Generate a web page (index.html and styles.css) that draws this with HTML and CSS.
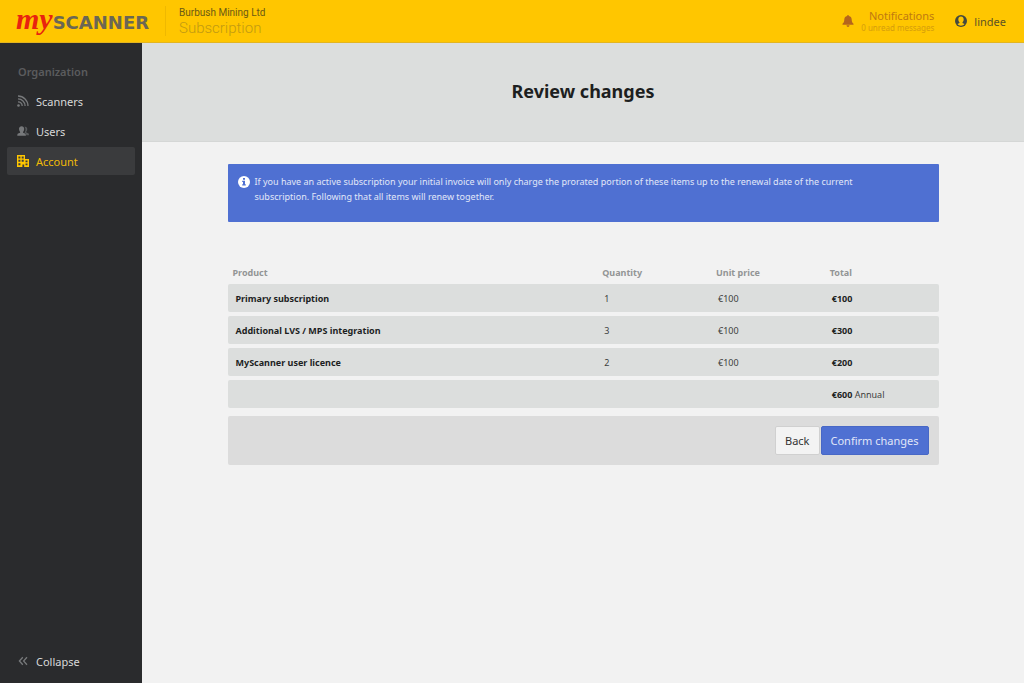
FILE: index.html
```html
<!DOCTYPE html>
<html lang="en">
<head>
<meta charset="utf-8">
<meta name="viewport" content="width=device-width, initial-scale=1">
<title>Review changes</title>
<link rel="stylesheet" href="styles.css">
</head>
<body>
<header class="topbar">
  <a class="logo" href="#"><span class="logo-my">my</span><span class="logo-name">SCANNER</span></a>
  <div class="context">
    <div class="company">Burbush Mining Ltd</div>
    <div class="section">Subscription</div>
  </div>
  <a class="notifications" href="#">
    <svg class="bell" viewBox="0 0 12 12" aria-hidden="true"><path d="M6 0c.6 0 .9.4.9.9C8.900 1.300 9.700 2.800 9.700 4.600c0 2.400.7 3.400 1.800 4.200v.9H.5v-.9c1.100-.8 1.800-1.800 1.800-4.200 0-1.800.8-3.300 2.800-3.700C5.100.4 5.400 0 6 0zM4.500 10.300h3C7.400 11.300 6.800 12 6 12s-1.400-.7-1.500-1.700z"/></svg>
    <span class="notice-text"><span class="notice-title">Notifications</span><span class="notice-count">0 unread messages</span></span>
  </a>
  <a class="user" href="#">
    <svg class="avatar" viewBox="0 0 12 12" aria-hidden="true"><circle class="avatar-disc" cx="6" cy="6" r="6"/><path class="avatar-figure" d="M6 1.600c1.700 0 2.700 1.200 2.700 2.900 0 1.200-.5 2.200-1.200 2.800v.8l2 1c-.8 1-2.100 1.600-3.500 1.600s-2.700-.6-3.500-1.600l2-1v-.8c-.7-.6-1.200-1.600-1.200-2.800 0-1.700 1-2.900 2.700-2.900z"/></svg>
    <span>lindee</span>
  </a>
</header>
<div class="shell">
  <nav class="sidebar">
    <h2 class="nav-heading">Organization</h2>
    <a class="nav-item" href="#">
      <svg class="nav-icon" viewBox="0 0 12 12" aria-hidden="true"><circle cx="1.500" cy="10.500" r="1.300"/><path class="line" d="M1 6.800a4.200 4.200 0 0 1 4.200 4.200M1 3.900a7.100 7.100 0 0 1 7.100 7.100M1 1a10 10 0 0 1 10 10"/></svg>
      Scanners</a>
    <a class="nav-item" href="#">
      <svg class="nav-icon" viewBox="0 0 12 12" aria-hidden="true"><path opacity=".6" d="M7.500 1.800c1.600-.5 2.800.6 2.800 2.300 0 1.100-.4 1.900-1 2.500v.8l2 .8c.5.300.7.900.7 2H9.300c0-1.300-.5-2-1.800-2.500.8-1 1-2.200 1-3.200 0-1.200-.3-2.100-1-2.700z"/><path d="M4.600 1.200c1.600 0 2.600 1.200 2.600 2.900 0 1.200-.4 2.100-1.100 2.800v.8l2 .8c.6.300.8 1 .8 2.300H.3c0-1.300.2-2 .8-2.300l2-.8v-.8C2.400 6.200 2 5.300 2 4.100c0-1.700 1-2.900 2.600-2.900z"/></svg>
      Users</a>
    <a class="nav-item active" href="#" aria-current="page">
      <svg class="nav-icon" viewBox="0 0 12 12" aria-hidden="true"><path fill-rule="evenodd" d="M0 0h8v4h4v8H7.200V9.500H5.400V12H0zM1.400 1.400v2h2v-2zM4.700 1.400v2h2v-2zM1.400 4.800v2h2v-2zM4.700 4.800v2h2v-2zM1.400 8.300v2h2v-2zM8.500 5.400v1.800h2V5.400zM8.500 8.500v1.800h2V8.500z"/></svg>
      Account</a>
    <button class="nav-item collapse" type="button">
      <svg class="nav-icon" viewBox="0 0 12 12" aria-hidden="true"><path class="line" d="M5.800 2.300 2.400 6l3.400 3.700M10 2.300 6.600 6 10 9.700"/></svg>
      Collapse</button>
  </nav>
  <main class="main">
    <div class="banner"><h1 class="title">Review changes</h1></div>
    <div class="content">
      <div class="info">
        <svg class="info-icon" viewBox="0 0 12 12" aria-hidden="true"><circle class="info-disc" cx="6" cy="6" r="6"/><path class="info-mark" d="M5 2h2v1.700H5zM4.200 4.700H7v3.600h.8v1.300H4.200V8.300H5V6h-.8z"/></svg>
        <p class="info-text">If you have an active subscription your initial invoice will only charge the prorated portion of these items up to the renewal date of the current subscription. Following that all items will renew together.</p>
      </div>
      <table class="items">
        <thead>
          <tr><th class="product">Product</th><th>Quantity</th><th>Unit price</th><th>Total</th></tr>
        </thead>
        <tbody>
          <tr><td class="strong">Primary subscription</td><td>1</td><td>€100</td><td class="strong">€100</td></tr>
          <tr><td class="strong">Additional LVS / MPS integration</td><td>3</td><td>€100</td><td class="strong">€300</td></tr>
          <tr><td class="strong">MyScanner user licence</td><td>2</td><td>€100</td><td class="strong">€200</td></tr>
          <tr><td></td><td></td><td></td><td><b class="strong">€600</b> Annual</td></tr>
        </tbody>
      </table>
      <div class="actions">
        <button class="button" type="button">Back</button>
        <button class="button primary" type="button">Confirm changes</button>
      </div>
    </div>
  </main>
</div>
</body>
</html>
```
FILE: styles.css
```css
* { box-sizing: border-box; }
body {
  margin: 0;
  min-height: 100vh;
  display: flex;
  flex-direction: column;
  background: #f2f2f2;
  color: #1d1f1f;
  font-family: "Noto Sans", sans-serif;
  font-size: 11px;
}
a { color: inherit; text-decoration: none; }
button { font: inherit; cursor: pointer; }
h1, h2, p { margin: 0; }

.topbar {
  display: flex;
  align-items: center;
  height: 43px;
  padding: 0 18px 0 16px;
  background: #ffc600;
  border-bottom: 1px solid #e3b520;
}
.logo { display: flex; align-items: baseline; width: 149px; line-height: 28px; }
.logo-my { color: #e8230f; font: italic bold 30px/28px "Liberation Serif", serif; }
.logo-name { color: #6b6754; font: bold 18px/28px "DejaVu Sans", sans-serif; }
.context {
  padding-left: 13px;
  border-left: 1px solid #efb800;
}
.company { color: #6b5a14; font: 10px/14px Roboto, sans-serif; }
.section { color: #c29a12; font: 300 15px/16px Roboto, sans-serif; }
.notifications {
  display: flex;
  align-items: center;
  gap: 7px;
  margin-left: auto;
  color: #c07a10;
}
.bell { width: 12px; height: 12px; fill: #b5651d; }
.notice-text { display: flex; flex-direction: column; align-items: flex-end; }
.notice-title { font-size: 11px; line-height: 12px; }
.notice-count { color: #d59d0c; font-size: 8px; line-height: 11px; }
.user {
  display: flex;
  align-items: center;
  gap: 7px;
  margin-left: 21px;
  color: #5c5325;
}
.avatar { width: 12px; height: 12px; }
.avatar-disc { fill: #44493f; }
.avatar-figure { fill: #ffc600; }

.shell { display: flex; flex: 1; }
.sidebar {
  display: flex;
  flex-direction: column;
  gap: 2px;
  flex: 0 0 142px;
  padding: 20px 7px 8px;
  background: #2a2b2d;
}
.nav-heading {
  padding-left: 11px;
  color: #5b5c5e;
  font-size: 11px;
  font-weight: 600;
  line-height: 18px;
  margin-bottom: 4px;
}
.nav-item {
  display: flex;
  align-items: center;
  gap: 7px;
  height: 28px;
  padding: 0 10px;
  color: #d8d9d9;
  border: 0;
  border-radius: 2px;
  background: none;
}
.nav-icon { width: 12px; height: 12px; fill: #77797b; }
.line { fill: none; stroke: #77797b; stroke-width: 1.3; }
.active { background: #3a3b3d; color: #f0ba08; }
.active .nav-icon { fill: #ffc600; }
.collapse { margin-top: auto; }

.main { flex: 1; min-width: 0; }
.banner {
  display: flex;
  align-items: center;
  justify-content: center;
  height: 99px;
  padding-bottom: 2px;
  background: #dcdedd;
  border-bottom: 1px solid #d5d7d6;
}
.title { font-size: 18px; font-weight: 700; line-height: 26px; }
.content { max-width: 711px; margin: 22px auto; }
.info {
  display: flex;
  gap: 5px;
  padding: 10px 50px 18px 10px;
  background: #4f70d2;
  border-radius: 1px;
  color: #e1e7f8;
}
.info-icon { flex: none; width: 12px; height: 12px; margin-top: 2px; }
.info-disc { fill: #fff; }
.info-mark { fill: #4f70d2; }
.info-text { font-size: 9px; line-height: 15px; }
.items {
  width: 100%;
  margin-top: 40px;
  table-layout: fixed;
  border-collapse: separate;
  border-spacing: 0 4px;
  font-size: 9px;
  line-height: 14px;
  text-align: left;
}
.items th { width: 16%; height: 14px; padding: 0 5px; color: #939595; font-weight: 700; }
.items .product { width: 52%; }
.items td { height: 28px; padding: 1px 7px 0; background: #dcdedd; color: #3c3e3e; }
.items td:first-child { padding-left: 8px; border-radius: 2px 0 0 2px; }
.items td:last-child { border-radius: 0 2px 2px 0; }
.items .strong { color: #1d1f1f; font-weight: 700; }
.actions {
  display: flex;
  justify-content: flex-end;
  gap: 1px;
  margin-top: 4px;
  padding: 10px;
  background: #dcdcdc;
  border-radius: 2px;
}
.button {
  height: 29px;
  padding: 0 9px;
  border: 1px solid #d0d0d0;
  border-radius: 2px;
  background: #f3f3f3;
  color: #333;
}
.primary { background: #4f70d2; border-color: #4868c6; color: #e1e7f8; }
```
